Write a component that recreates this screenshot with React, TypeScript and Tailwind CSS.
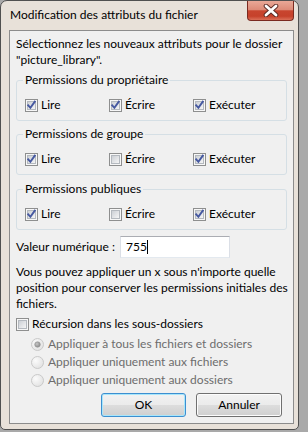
import React from "react";

function Check({ checked }: { checked: boolean }) {
  return (
    <svg width="13" height="13" viewBox="0 0 13 13" className="shrink-0 block">
      <defs>
        <linearGradient id="cbg" x1="0" y1="0" x2="1" y2="1">
          <stop offset="0" stopColor="#c9cdd3" />
          <stop offset="1" stopColor="#f8f8f8" />
        </linearGradient>
      </defs>
      <rect x="0.5" y="0.5" width="12" height="12" fill="#f7f7f7" stroke="#8e8f8f" />
      <rect x="2.5" y="2.5" width="8" height="8" fill="url(#cbg)" stroke="#b4b9bf" />
      {checked && (
        <path d="M3.2 6.3 L5.4 8.8 L9.8 2.6" fill="none" stroke="#4558a0" strokeWidth="1.9" strokeLinecap="square" />
      )}
    </svg>
  );
}

function Radio({ checked }: { checked: boolean }) {
  return (
    <svg width="13" height="13" viewBox="0 0 13 13" className="shrink-0 block">
      <defs>
        <radialGradient id="rbg" cx="0.35" cy="0.35" r="0.7">
          <stop offset="0" stopColor="#fbfbfb" />
          <stop offset="1" stopColor="#e2e2e2" />
        </radialGradient>
        <radialGradient id="rdot" cx="0.4" cy="0.4" r="0.6">
          <stop offset="0" stopColor="#c8c8c8" />
          <stop offset="1" stopColor="#8a8a8a" />
        </radialGradient>
      </defs>
      <circle cx="6.5" cy="6.5" r="6" fill="url(#rbg)" stroke="#c9c9c9" />
      {checked && <circle cx="6.5" cy="6.5" r="2.8" fill="url(#rdot)" stroke="#9a9a9a" strokeWidth="0.6" />}
    </svg>
  );
}

function CheckRow({ items }: { items: [string, boolean][] }) {
  return (
    <div className="grid grid-cols-[84px_84px_1fr]">
      {items.map(([label, checked]) => (
        <div key={label} className="flex items-center gap-[3px] h-[16px]">
          <Check checked={checked} />
          <span>{label}</span>
        </div>
      ))}
    </div>
  );
}

function Group({ title, items, className }: { title: string; items: [string, boolean][]; className: string }) {
  return (
    <fieldset className={"border border-[#d5dfe5] rounded-[3px] px-[8px] pt-[9px] pb-[7px] " + className}>
      <legend className="px-[2px] -ml-[2px] leading-[16px]">{title}</legend>
      <CheckRow items={items} />
    </fieldset>
  );
}

export default function App() {
  return (
    <div className="w-[308px] h-[432px] bg-[#a9a9a9] overflow-hidden font-['Lato','Noto_Sans',sans-serif] text-[12px] leading-[16px] text-black">
      <div className="w-[299px] h-[430px] flex flex-col rounded-t-[7px] rounded-b-[5px] border border-[#505050] bg-[#e8e1d9]">
        <div className="h-[29px] shrink-0 flex justify-between">
          <div className="pl-[9px] pt-[6px] whitespace-nowrap">Modification des attributs du fichier</div>
          <div className="w-[47px] h-[20px] mr-[4px] rounded-b-[4px] border border-t-0 border-[#7a2a20] bg-[linear-gradient(#e9a897_0%,#dd8b78_45%,#c8452f_52%,#c6412b_80%,#da6f58_100%)] flex items-center justify-center">
            <svg width="18" height="13" viewBox="0 0 18 13">
              <path d="M4 2 L14 11 M14 2 L4 11" stroke="#5a2a24" strokeWidth="4.6" strokeLinecap="round" />
              <path d="M4 2 L14 11 M14 2 L4 11" stroke="#ffffff" strokeWidth="2.8" strokeLinecap="round" />
            </svg>
          </div>
        </div>
        <div className="flex-1 ml-[8px] mr-[4px] mb-[5px] border border-[#8c8c8c] bg-[#f0f0f0] flex flex-col px-[6px] pt-[5px]">
          <p className="whitespace-nowrap">
            Sélectionnez les nouveaux attributs pour le dossier
            <br />
            "picture_library".
          </p>
          <Group
            className="mt-[4px]"
            title="Permissions du propriétaire"
            items={[["Lire", true], ["Écrire", true], ["Exécuter", true]]}
          />
          <Group
            className="mt-[5px]"
            title="Permissions de groupe"
            items={[["Lire", true], ["Écrire", false], ["Exécuter", true]]}
          />
          <Group
            className="mt-[6px]"
            title="Permissions publiques"
            items={[["Lire", true], ["Écrire", false], ["Exécuter", true]]}
          />
          <div className="mt-[6px] flex items-center h-[22px]">
            <span className="w-[104px] whitespace-nowrap">Valeur numérique :</span>
            <div className="w-[110px] h-[22px] border border-[#abadb3] border-b-[#e3e9ef] border-x-[#dbdfe6] bg-white pl-[5px] flex items-center">
              <span>755</span>
              <span className="inline-block w-[1px] h-[14px] bg-black"></span>
            </div>
          </div>
          <p className="mt-[6px] whitespace-nowrap">
            Vous pouvez appliquer un x sous n'importe quelle
            <br />
            position pour conserver les permissions initiales des
            <br />
            fichiers.
          </p>
          <div className="mt-[4px] flex items-center gap-[3px] h-[16px]">
            <Check checked={false} />
            <span>Récursion dans les sous-dossiers</span>
          </div>
          <div className="mt-[3px] flex flex-col pl-[15px] text-[#6d6d6d]">
            {[
              ["Appliquer à tous les fichiers et dossiers", true],
              ["Appliquer uniquement aux fichiers", false],
              ["Appliquer uniquement aux dossiers", false],
            ].map(([label, c]) => (
              <div key={label as string} className="h-[18px] flex items-center gap-[4px]">
                <Radio checked={c as boolean} />
                <span>{label as string}</span>
              </div>
            ))}
          </div>
          <div className="mt-[4px] flex justify-end gap-[10px] pr-[5px]">
            <button className="w-[85px] h-[24px] rounded-[3px] border border-[#3c8fd0] bg-[linear-gradient(#f2f2f2_0%,#ebebeb_50%,#dddddd_50%,#cfcfcf_100%)] shadow-[inset_0_0_0_1px_#a8e6fb] flex items-center justify-center">
              OK
            </button>
            <button className="w-[86px] h-[24px] rounded-[3px] border border-[#707070] bg-[linear-gradient(#f2f2f2_0%,#ebebeb_50%,#dddddd_50%,#cfcfcf_100%)] shadow-[inset_0_0_0_1px_#fcfcfc] flex items-center justify-center">
              Annuler
            </button>
          </div>
        </div>
      </div>
    </div>
  );
}
